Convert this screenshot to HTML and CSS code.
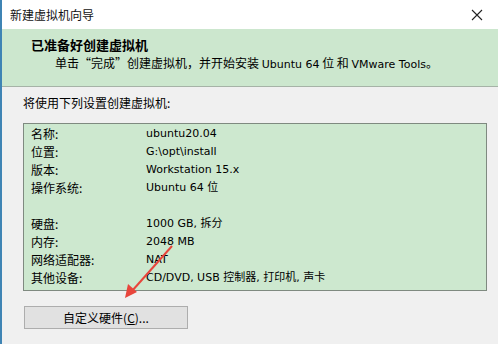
FILE: index.html
```html
<!DOCTYPE html>
<html lang="zh-CN">
<head>
    <meta charset="UTF-8">
    <title>新建虚拟机向导</title>
    <link rel="stylesheet" href="styles.css">
</head>
<body>
    <div class="window">
        <div class="titlebar">
            <span class="title">新建虚拟机向导</span>
            <svg class="close" width="12" height="12" viewBox="0 0 12 12">
                <path d="M1 1 L11 11 M11 1 L1 11" stroke="#222" stroke-width="1.1" fill="none"/>
            </svg>
        </div>
        <div class="header">
            <div class="header-title">已准备好创建虚拟机</div>
            <div class="header-sub">单击“完成”创建虚拟机，并开始安装 <span class="latin">Ubuntu 64</span> 位 和 <span class="latin">VMware Tools</span>。</div>
        </div>
        <div class="content">
            <p class="intro">将使用下列设置创建虚拟机:</p>
            <div class="summary">
                <div class="row"><span class="label">名称:</span><span class="value">ubuntu20.04</span></div>
                <div class="row"><span class="label">位置:</span><span class="value">G:\opt\install</span></div>
                <div class="row"><span class="label">版本:</span><span class="value">Workstation 15.x</span></div>
                <div class="row"><span class="label">操作系统:</span><span class="value">Ubuntu 64 位</span></div>
                <div class="row"></div>
                <div class="row"><span class="label">硬盘:</span><span class="value">1000 GB, 拆分</span></div>
                <div class="row"><span class="label">内存:</span><span class="value">2048 MB</span></div>
                <div class="row"><span class="label">网络适配器:</span><span class="value">NAT</span></div>
                <div class="row"><span class="label">其他设备:</span><span class="value">CD/DVD, USB 控制器, 打印机, 声卡</span></div>
            </div>
            <button class="btn">自定义硬件(<u>C</u>)...</button>
        </div>
        <svg class="arrow" width="498" height="344" viewBox="0 0 498 344">
            <path d="M172 246 L132 291" stroke="#e8453c" stroke-width="2" fill="none"/>
            <path d="M125 298 L128 284 L137 292 Z" fill="#e8453c"/>
        </svg>
    </div>
</body>
</html>
```

FILE: styles.css
```css
* {
    margin: 0;
    padding: 0;
    box-sizing: border-box;
}
body {
    background: #f0f0f0;
    font-family: "DejaVu Sans", "Noto Sans CJK SC", sans-serif;
    font-size: 12px;
    color: #000;
}
.window {
    position: relative;
    width: 498px;
    height: 344px;
    border-left: 2px solid #3f84b4;
    background: #f0f0f0;
    overflow: hidden;
}
.titlebar {
    height: 29px;
    background: #fff;
    display: flex;
    align-items: center;
    justify-content: space-between;
    padding: 0 15px 0 8px;
}
.title {
    font-family: "Noto Sans CJK SC", sans-serif;
    font-size: 12px;
    color: #111;
}
.header {
    height: 58px;
    background: #cce7ce;
    border-bottom: 1px solid #a6b3a7;
    padding: 7px 0 0 29px;
}
.header-title {
    font-family: "Noto Sans CJK SC", sans-serif;
    font-weight: bold;
    font-size: 13px;
    line-height: 18px;
}
.header-sub {
    font-family: "Noto Sans CJK SC", sans-serif;
    line-height: 18px;
    padding-left: 24px;
}
.latin {
    font-family: "DejaVu Sans", sans-serif;
    font-size: 11px;
}
.content {
    padding: 7px 0 0 21px;
}
.intro {
    font-family: "Noto Sans CJK SC", sans-serif;
    line-height: 18px;
}
.summary {
    margin-top: 11px;
    width: 464px;
    height: 168px;
    background: #cde8cf;
    border: 1px solid #7f8a80;
    padding: 1px 0 0 7px;
}
.row {
    display: flex;
    height: 18px;
    line-height: 18px;
}
.label {
    width: 115px;
    font-family: "Noto Sans CJK SC", sans-serif;
}
.value {
    font-family: "DejaVu Sans", "Noto Sans CJK SC", sans-serif;
    font-size: 11px;
}
.btn {
    margin: 15px 0 0 1px;
    width: 164px;
    height: 23px;
    background: #e1e1e1;
    border: 1px solid #adadad;
    font-family: "Noto Sans CJK SC", sans-serif;
    font-size: 12px;
    color: #000;
}
.arrow {
    position: absolute;
    top: 0;
    left: -2px;
    pointer-events: none;
}
```
